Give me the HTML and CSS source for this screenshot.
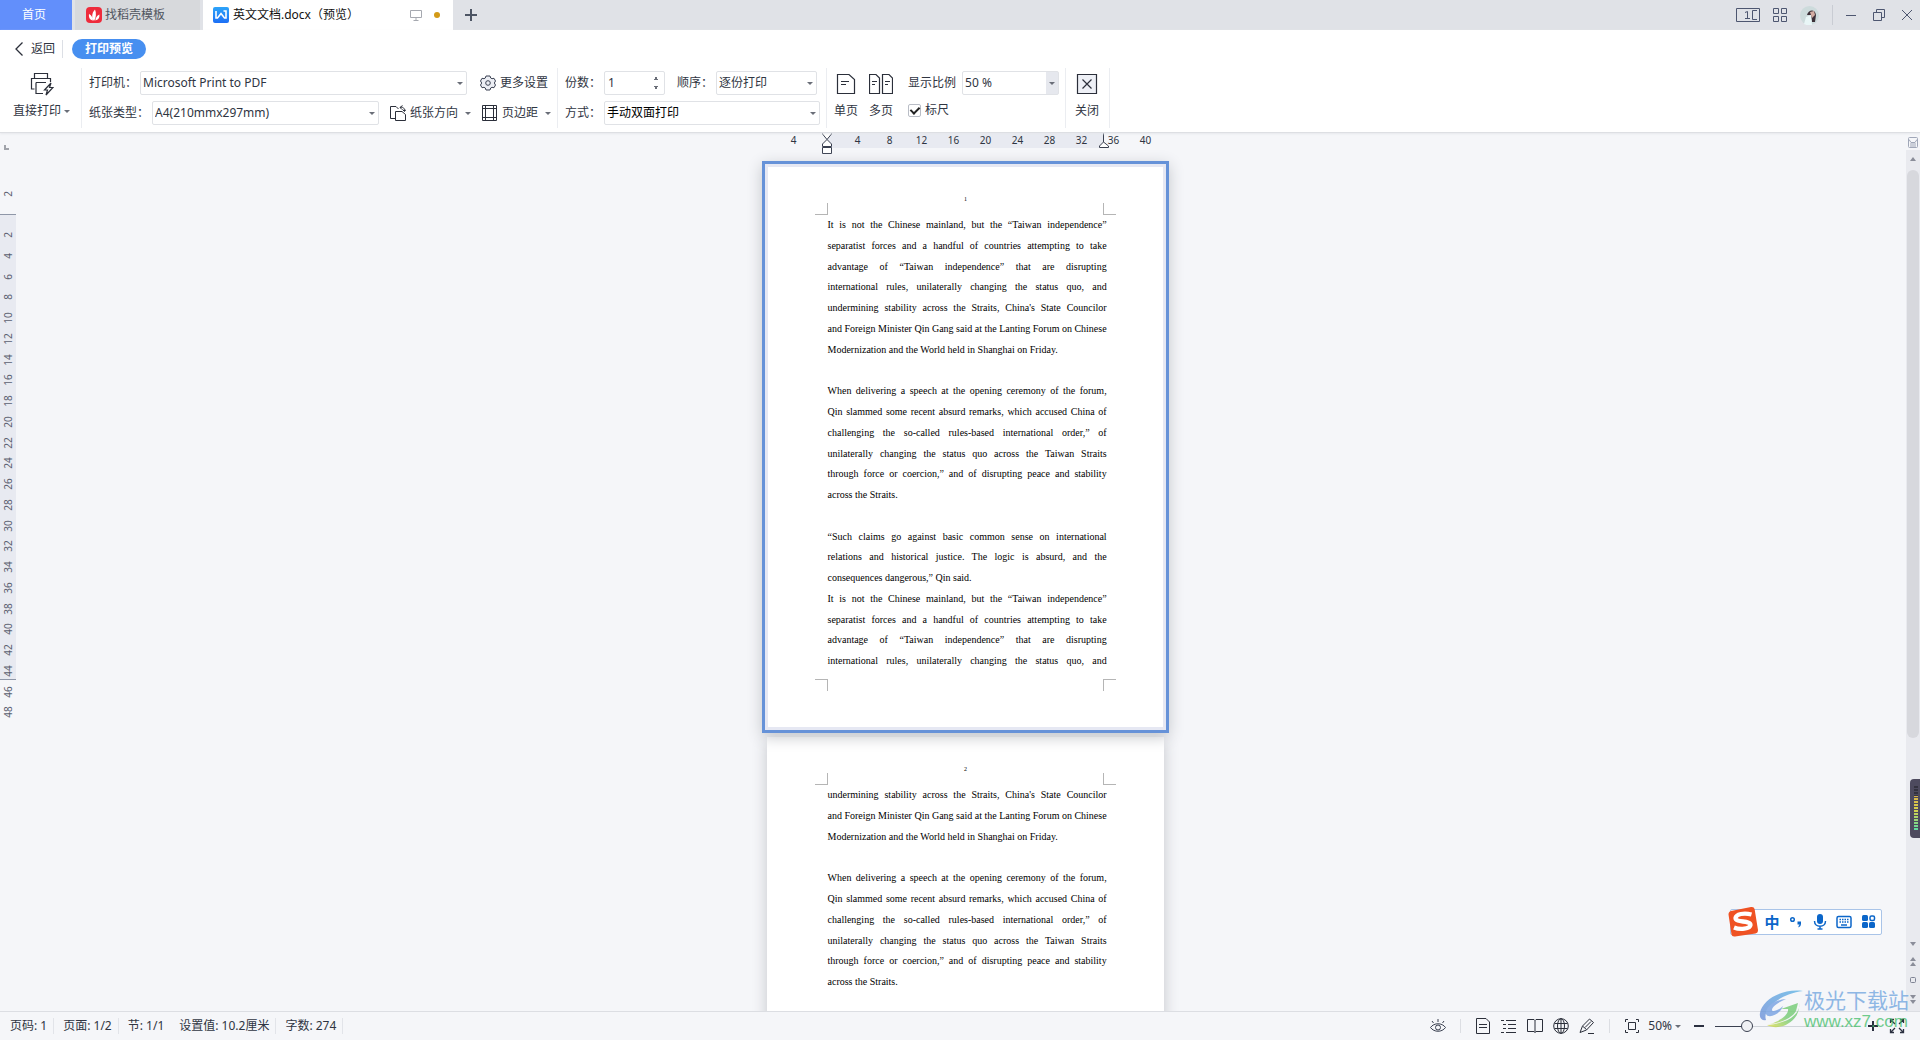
FILE: index.html
```html
<!DOCTYPE html>
<html lang="zh-CN">
<head>
<meta charset="utf-8">
<title>英文文档.docx（预览）</title>
<link rel="stylesheet" href="styles.css">
</head>
<body>
<header class="tabs">
  <button class="tab tab-home">首页</button>
  <button class="tab tab-idle">
    <svg width="16" height="16" viewBox="0 0 16 16"><rect width="16" height="16" rx="4" fill="#ee2b3b"/><path d="M8 14C5.500 11 5.500 6 9 2.500C10.500 6 10.200 11 8 14ZM7 13.500C4 13 2.500 10.500 3 7C5.500 8 6.500 10.500 7 13.500ZM9.300 13.500C9.600 11 10.800 8.500 13.400 7.500C13.800 10.500 12.400 13 9.300 13.500Z" fill="#fff"/></svg>
    <span>找稻壳模板</span>
  </button>
  <button class="tab tab-active">
    <svg width="16" height="16" viewBox="0 0 16 16"><defs><linearGradient id="w" x1="0" y1="0" x2="0" y2="1"><stop offset="0" stop-color="#2da4f9"/><stop offset="1" stop-color="#1d6ff5"/></linearGradient></defs><rect width="16" height="16" rx="2" fill="url(#w)"/><path d="M3 4V11H4.500L8 6.500L11.500 11H13V4H10.500" fill="none" stroke="#fff" stroke-width="1.600"/></svg>
    <span class="tab-name">英文文档.docx（预览）</span>
    <svg width="12" height="12" viewBox="0 0 12 12" fill="none" stroke="#a6a9b0"><path d="M.5 1.500H11.500V8.500H.5ZM6 8.500V11M3.500 11.500H8.500"/></svg>
    <span class="dot"></span>
  </button>
  <button class="tab-add" aria-label="新建"><svg width="12" height="12" viewBox="0 0 12 12" stroke="#4d5564" stroke-width="2"><path d="M6 0V12M0 6H12"/></svg></button>
  <div class="win">
    <svg width="24" height="14" viewBox="0 0 24 14" fill="none" stroke="#4d5670"><path d="M.5.5H23.500V13.500H.5ZM9 4.500L11.500 3.500V11M9 10.500H14M21 2.500H16.500V11.500H21M19 11.500H21"/></svg>
    <svg width="14" height="14" viewBox="0 0 14 14" fill="none" stroke="#4d5670"><path d="M.5.5H5.500V5.500H.5ZM8.500.5H13.500V5.500H8.500ZM.5 8.500H5.500V13.500H.5ZM8.500 8.500H13.500V13.500H8.500Z"/></svg>
    <svg width="19" height="19" viewBox="0 0 19 19"><circle cx="9.500" cy="9.500" r="9.500" fill="#cddbdc"/><path d="M7 9C8 4 15 2 16 9L15 16H12L11 9Z" fill="#3d3038"/><path d="M10 6L14 5L15 9L12 12Z" fill="#d3aca2"/><path d="M4 18L6 11L11 9L12 19C9 20 6 19 4 18Z" fill="#e9f6f7"/></svg>
    <span class="win-rule"></span>
    <button aria-label="最小化"><svg width="10" height="12" viewBox="0 0 10 12" stroke="#4d5670"><path d="M0 6.500H10"/></svg></button>
    <button aria-label="还原"><svg width="12" height="12" viewBox="0 0 12 12" fill="none" stroke="#4d5670"><path d="M.5 3.500H8.500V11.500H.5ZM3.500 3.500V.5H11.500V8.500H8.500"/></svg></button>
    <button aria-label="关闭窗口"><svg width="10" height="10" viewBox="0 0 10 10" stroke="#4d5670"><path d="M0 0L10 10M10 0L0 10"/></svg></button>
  </div>
</header>

<section class="ribbon">
  <div class="ribbon-head">
    <button class="back"><svg width="8" height="14" viewBox="0 0 8 14" fill="none" stroke="#2b2f3a" stroke-width="1.300"><path d="M7.500.5L1 7L7.500 13.500"/></svg>返回</button>
    <span class="pill">打印预览</span>
  </div>
  <div class="ribbon-body">
    <div class="group group-print">
      <button class="big">
        <svg width="24" height="24" viewBox="0 0 24 24" fill="none" stroke="#2b2f3a" stroke-width="1.200"><path d="M4.500 6V1.500H17.500V6M4.500 17H1.500V6.500H20.500V10M6 10.500H16M6 10.500V21.500H13M21 11L14.500 18H17.500L16 23L23 15.500H19.500Z"/></svg>
        <span>直接打印<i class="caret"></i></span>
      </button>
    </div>
    <div class="group group-rows">
      <div class="row">
        <label for="printer">打印机：</label>
        <span class="pick pick-printer"><select id="printer"><option>Microsoft Print to PDF</option></select></span>
        <button class="tool tool-more"><svg width="16" height="16" viewBox="0 0 16 16" fill="#eceef4" stroke="#3a4152"><path d="M6 1H10L10.700 3L12 3.700L14 3.300L15.500 6L14.300 8L15.500 10L14 12.700L12 12.300L10.700 13L10 15H6L5.300 13L4 12.300L2 12.700L.5 10L1.700 8L.5 6L2 3.300L4 3.700L5.300 3Z"/><circle cx="8" cy="8" r="2.300"/></svg>更多设置</button>
      </div>
      <div class="row">
        <label for="paper">纸张类型：</label>
        <span class="pick pick-paper"><select id="paper"><option>A4(210mmx297mm)</option></select></span>
        <button class="tool"><svg width="16" height="16" viewBox="0 0 16 16" fill="none" stroke="#2b2f3a"><path d="M5 13.500H.5V1.500H6L8.500 4M5.500 6.500H12L15.500 9.500V15.500H5.500ZM10 2.500C13 1.500 14.500 3 14.500 6M12.500 .5L10 2.500L12 4.500M12.500 4.500L14.500 6.500L16 4.500"/></svg>纸张方向<i class="caret"></i></button>
        <button class="tool"><svg width="16" height="16" viewBox="0 0 16 16" fill="none" stroke="#2b2f3a"><path d="M.5.5H14.500V15.500H.5ZM3.500.5V15.500M11.500.5V15.500M.5 3.500H14.500M.5 12.500H14.500"/></svg>页边距<i class="caret"></i></button>
      </div>
    </div>
    <div class="group group-rows">
      <div class="row">
        <label for="copies">份数：</label>
        <span class="spin"><input id="copies" type="text" value="1"><i></i></span>
        <label class="gap-label" for="order">顺序：</label>
        <span class="pick pick-order"><select id="order"><option>逐份打印</option></select></span>
      </div>
      <div class="row">
        <label for="mode">方式：</label>
        <span class="pick pick-mode"><select id="mode"><option>手动双面打印</option></select></span>
      </div>
    </div>
    <div class="group group-view">
      <button class="big"><svg width="24" height="24" viewBox="0 0 24 24" fill="none" stroke="#2b2f3a" stroke-width="1.200"><path d="M3.500 2.500H15L20.500 7.500V21.500H3.500ZM7 9.500H15M7 12.500H12"/></svg><span>单页</span></button>
      <button class="big"><svg width="24" height="24" viewBox="0 0 24 24" fill="none" stroke="#2b2f3a" stroke-width="1.200"><path d="M.5 2.500H7L10.500 6V21.500H.5ZM13.500 2.500H20L23.500 6V21.500H13.500ZM3 9.500H8M3 12.500H6M16 9.500H21M16 12.500H19"/></svg><span>多页</span></button>
      <div class="stack">
        <div class="row">
          <label for="zoom">显示比例</label>
          <span class="pick pick-zoom"><select id="zoom"><option>50 %</option></select></span>
        </div>
        <label class="check"><input type="checkbox" checked>标尺</label>
      </div>
    </div>
    <div class="group group-close">
      <button class="big"><svg width="24" height="24" viewBox="0 0 24 24" fill="#eef0f6" stroke="#2b2f3a" stroke-width="1.200"><path d="M2.500 2.500H21.500V21.500H2.500ZM7.500 7.500L16.500 16.500M16.500 7.500L7.500 16.500"/></svg><span>关闭</span></button>
    </div>
  </div>
</section>

<main class="work">
  <aside class="vruler">
    <span class="tabstop"></span>
    <div class="vtop"><b>2</b></div>
    <div class="vnums"><b>2</b><b>4</b><b>6</b><b>8</b><b>10</b><b>12</b><b>14</b><b>16</b><b>18</b><b>20</b><b>22</b><b>24</b><b>26</b><b>28</b><b>30</b><b>32</b><b>34</b><b>36</b><b>38</b><b>40</b><b>42</b><b>44</b><b>46</b><b>48</b></div>
  </aside>
  <div class="canvas">
    <div class="hruler">
      <b>4</b><b></b><b>4</b><b>8</b><b>12</b><b>16</b><b>20</b><b>24</b><b>28</b><b>32</b><b>36</b><b>40</b>
      <svg class="indent-left" width="10" height="22" viewBox="0 0 10 22" fill="#fff" stroke="#3a4050"><path d="M.5.5H9.500V2L5 7.500L.5 2ZM5 7.500L9.500 12V14.500H.5V12ZM.5 15.500H9.500V21.500H.5Z"/></svg>
      <svg class="indent-right" width="10" height="16" viewBox="0 0 10 16" fill="#fff" stroke="#3a4050"><path d="M4.500 0V10M4.500 10L9.500 14V15.500H.5V14Z"/></svg>
    </div>
    <article class="sheet sheet-current">
      <div class="folio">1</div>
      <div class="marks marks-top"><i></i><i></i></div>
      <div class="lines lines-full">
        <p>It is not the Chinese mainland, but the “Taiwan independence”</p>
        <p>separatist forces and a handful of countries attempting to take</p>
        <p>advantage of “Taiwan independence” that are disrupting</p>
        <p>international rules, unilaterally changing the status quo, and</p>
        <p>undermining stability across the Straits, China's State Councilor</p>
        <p>and Foreign Minister Qin Gang said at the Lanting Forum on Chinese</p>
        <p class="end">Modernization and the World held in Shanghai on Friday.</p>
        <p></p>
        <p>When delivering a speech at the opening ceremony of the forum,</p>
        <p>Qin slammed some recent absurd remarks, which accused China of</p>
        <p>challenging the so-called rules-based international order,” of</p>
        <p>unilaterally changing the status quo across the Taiwan Straits</p>
        <p>through force or coercion,” and of disrupting peace and stability</p>
        <p class="end">across the Straits.</p>
        <p></p>
        <p>“Such claims go against basic common sense on international</p>
        <p>relations and historical justice. The logic is absurd, and the</p>
        <p class="end">consequences dangerous,” Qin said.</p>
        <p>It is not the Chinese mainland, but the “Taiwan independence”</p>
        <p>separatist forces and a handful of countries attempting to take</p>
        <p>advantage of “Taiwan independence” that are disrupting</p>
        <p>international rules, unilaterally changing the status quo, and</p>
      </div>
      <div class="marks marks-bottom"><i></i><i></i></div>
    </article>
    <article class="sheet sheet-next">
      <div class="folio">2</div>
      <div class="marks marks-top"><i></i><i></i></div>
      <div class="lines">
        <p>undermining stability across the Straits, China's State Councilor</p>
        <p>and Foreign Minister Qin Gang said at the Lanting Forum on Chinese</p>
        <p class="end">Modernization and the World held in Shanghai on Friday.</p>
        <p></p>
        <p>When delivering a speech at the opening ceremony of the forum,</p>
        <p>Qin slammed some recent absurd remarks, which accused China of</p>
        <p>challenging the so-called rules-based international order,” of</p>
        <p>unilaterally changing the status quo across the Taiwan Straits</p>
        <p>through force or coercion,” and of disrupting peace and stability</p>
        <p class="end">across the Straits.</p>
      </div>
    </article>
  </div>
  <aside class="scroll">
    <svg width="14" height="17" viewBox="0 0 14 17" fill="none" stroke="#a0a7b8"><rect x="2.500" y="4.500" width="9" height="10" rx="1"/><path d="M3 6.500L5 9.500H9L11 6.500M5 14V10M9 14V10M7 14V10"/></svg>
    <div class="track">
      <svg width="14" height="20" viewBox="0 0 14 20" fill="#8a8d99"><path d="M4 11L7 7L10 11Z"/></svg>
      <span class="thumb"></span>
      <svg class="jumps" width="14" height="77" viewBox="0 0 14 77" fill="#8a8d99"><path d="M4 8H10L7 12ZM4 27L7 23L10 27ZM4 32L7 28L10 32ZM4 61H10L7 65ZM4 66H10L7 70Z"/><rect x="4.500" y="43.500" width="5" height="5" rx="1" fill="none" stroke="#7f8494"/></svg>
    </div>
  </aside>
</main>

<footer class="status">
  <span class="cell">页码: 1</span><span class="cell">页面: 1/2</span><span class="cell plain">节: 1/1</span><span class="cell wide">设置值: 10.2厘米</span><span class="cell">字数: 274</span>
  <div class="tools">
    <button aria-label="护眼"><svg width="16" height="16" viewBox="0 0 16 16" fill="none" stroke="#3a4050"><path d="M.5 9.500C4 4.500 12 4.500 15.500 9.500C12 14.500 4 14.500 .5 9.500ZM8 4V1M3.500 5L2 3M12.500 5L14 3"/><circle cx="8" cy="9.500" r="2.500"/></svg></button>
    <span class="rule"></span>
    <button aria-label="页面视图"><svg width="16" height="16" viewBox="0 0 16 16" fill="none" stroke="#2b2f3a"><path d="M1.500.5H11L14.500 4V15.500H1.500ZM4 6.500H12M4 9.500H12"/></svg></button>
    <button aria-label="大纲"><svg width="16" height="16" viewBox="0 0 16 16" fill="none" stroke="#2b2f3a"><path d="M0 2.500H3M5 2.500H15M2 6.500H5M7 6.500H15M2 10.500H5M7 10.500H15M0 14.500H3M5 14.500H15"/></svg></button>
    <button aria-label="阅读版式"><svg width="16" height="16" viewBox="0 0 16 16" fill="none" stroke="#2b2f3a"><path d="M8 2.500L7 1.500H.5V13.500H7L8 14.500L9 13.500H15.500V1.500H9L8 2.500V14.500"/></svg></button>
    <button aria-label="Web版式"><svg width="16" height="16" viewBox="0 0 16 16" fill="none" stroke="#2b2f3a"><circle cx="8" cy="8" r="7.300"/><ellipse cx="8" cy="8" rx="3.500" ry="7.300"/><path d="M8 .5V15.500M1.500 5.500H14.500M1.500 10.500H14.500"/></svg></button>
    <button aria-label="写作模式"><svg width="16" height="16" viewBox="0 0 16 16" fill="none" stroke="#2b2f3a"><path d="M1 14.500L3.500 8L10.500 1L14.500 4.500L7.500 12L1 14.500ZM4 8.500L7.500 11.500M6 9.500L12 3.500M9 15.500H15"/></svg></button>
    <span class="rule"></span>
    <button aria-label="适应页面"><svg width="16" height="16" viewBox="0 0 16 16" fill="none" stroke="#2b2f3a"><path d="M1.500 4V1.500H4M12 1.500H14.500V4M14.500 12V14.500H12M4 14.500H1.500V12M4.500 4.500H11.500V11.500H4.500Z"/></svg></button>
    <button class="pct">50%<i class="caret"></i></button>
    <button aria-label="缩小"><svg width="12" height="16" viewBox="0 0 12 16" stroke="#2b3040" stroke-width="2"><path d="M1 8H11"/></svg></button>
    <input class="slide" type="range" min="0" max="100" value="20" aria-label="缩放">
    <button aria-label="放大"><svg width="12" height="16" viewBox="0 0 12 16" stroke="#2b3040" stroke-width="2"><path d="M1 8H11M6 3V13"/></svg></button>
    <button aria-label="全屏"><svg width="16" height="16" viewBox="0 0 16 16" fill="none" stroke="#2b3040" stroke-width="1.300"><path d="M1.500 5V1.500H5M1.500 1.500L6 6M11 1.500H14.500V5M14.500 1.500L10 6M1.500 11V14.500H5M1.500 14.500L6 10M11 14.500H14.500V11M14.500 14.500L10 10"/></svg></button>
  </div>
</footer>

<div class="meter"></div>

<div class="ime">
  <svg class="ime-logo" width="32" height="32" viewBox="0 0 32 32"><path d="M4 5L24 1Q27 .500 27.600 3L31 24Q31 27 28.500 27.500L8 30.500Q5 31 4.500 28.500L1.500 8.500Q1.500 5.500 4 5Z" fill="#ef5223"/><path d="M24.500 8.500C17 6.500 9 8 8.500 12C8.500 17 23.500 14 23.500 19C23 23 13 24 7 21.500" fill="none" stroke="#fff" stroke-width="4.300"/></svg>
  <span class="ime-lang">中</span>
  <svg width="14" height="16" viewBox="0 0 14 16"><circle cx="3.500" cy="5.500" r="1.800" fill="none" stroke="#0b66c9" stroke-width="1.500"/><path d="M8.500 7.500H12V10Q12 12.500 9.500 13.500V12Q10.500 11 10.500 10.500H8.500Z" fill="#0b66c9"/></svg>
  <svg width="14" height="16" viewBox="0 0 14 16"><rect x="4" y="0" width="6" height="10" rx="3" fill="#0b66c9"/><path d="M1.500 7C1.500 14 12.500 14 12.500 7M7 12V15.500M4.500 15H9.500" fill="none" stroke="#0b66c9" stroke-width="1.500"/></svg>
  <svg width="16" height="16" viewBox="0 0 16 16" fill="none" stroke="#0b66c9"><rect x="1" y="2.500" width="14" height="11" rx="1.500" stroke-width="1.500"/><path d="M3.500 5.500H13M3.500 8H13" stroke-width="1.600" stroke-dasharray="1.500 1"/><path d="M5 11H11" stroke-width="1.500"/></svg>
  <svg width="14" height="16" viewBox="0 0 14 16" fill="#0b66c9"><rect x="0" y="1" width="6" height="6" rx="1.500"/><rect x="0" y="8" width="6" height="6" rx="1.500"/><rect x="7" y="8" width="6" height="6" rx="1.500"/><rect x="8" y="2" width="4.500" height="4.500" rx="1.500" fill="none" stroke="#0b66c9" stroke-width="1.500"/></svg>
</div>

<div class="mark">
  <svg width="46" height="42" viewBox="0 0 46 42"><defs><linearGradient id="g1" x1="0" y1="1" x2="1" y2="0"><stop offset="0" stop-color="#6689d6"/><stop offset="1" stop-color="#54b0e4"/></linearGradient><linearGradient id="g2" x1="0" y1="1" x2="1" y2="0"><stop offset="0" stop-color="#e3df3f"/><stop offset=".5" stop-color="#6cc86b"/><stop offset="1" stop-color="#69c96b"/></linearGradient></defs><path d="M45 2C24-1 4 11 2 24C1 29 4 32 8 31C4 20 22 5 45 2Z" fill="url(#g1)"/><path d="M28 10C15 11 7 19 8 25C10 30 22 26 25 17C20 22 14 23 14 21C14 17 21 13 28 10Z" fill="#6d9be0"/><path d="M41 14C43 24 32 34 9 36C22 43 43 32 41 14ZM23 20L40 14L38 22C35 28 24 34 12 35C25 31 31 24 30 20Z" fill="url(#g2)"/></svg>
  <div><span class="mark-name">极光下载站</span><span class="mark-url">www.xz7.com</span></div>
</div>
</body>
</html>
```
FILE: styles.css
```css
* { box-sizing: border-box; }
body {
  margin: 0;
  height: 100vh;
  display: flex;
  flex-direction: column;
  overflow: hidden;
  position: relative;
  background: #f5f6f9;
  color: #2f3542;
  font: 12px/16px "Noto Sans", "Noto Sans CJK SC", sans-serif;
}
button, select, input { font: inherit; color: inherit; }
button { border: 0; padding: 0; background: none; display: flex; align-items: center; white-space: nowrap; }
svg { flex: none; display: block; }
p { margin: 0; }
b, i { font-weight: 400; font-style: normal; }

/* Document tabs */
.tabs { display: flex; height: 30px; flex: none; background: #e0e2e7; }
.tab { height: 30px; }
.tab-home { width: 72px; padding-left: 22px; background: #628ffb; color: #fff; margin-right: 3px; }
.tab-idle { width: 125px; padding-left: 11px; gap: 3px; background: #d7d9dc; color: #50555f; margin-right: 3px; }
.tab-active { width: 250px; padding: 0 13px 0 10px; gap: 4px; background: #fff; color: #111; }
.tab-name { flex: 1; text-align: left; }
.dot { width: 6px; height: 6px; border-radius: 50%; background: #d39a17; margin-left: 8px; }
.tab-add { margin-left: 12px; }
.win { margin-left: auto; display: flex; align-items: center; gap: 13px; padding-right: 8px; }
.win-rule { width: 1px; height: 20px; background: #c9ccd3; }
.win button + button { margin-left: 4px; }

/* Print ribbon */
.ribbon { flex: none; background: #fff; border-bottom: 1px solid #dddfe3; box-shadow: 0 1px 2px #e6e8ec; z-index: 1; }
.ribbon-head { display: flex; align-items: center; height: 38px; padding-left: 15px; }
.back { gap: 8px; height: 18px; padding-right: 7px; border-right: 1px solid #dcdfe5; }
.pill { margin-left: 9px; width: 74px; height: 20px; border-radius: 10px; background: #478ff0; color: #fff; font-weight: 700; line-height: 20px; text-align: center; }
.ribbon-body { display: flex; height: 64px; }
.group { display: flex; height: 60px; padding-top: 3px; border-right: 1px solid #ebedf1; white-space: nowrap; }
.group-print { width: 82px; padding-left: 13px; }
.big { flex-direction: column; height: 52px; gap: 7px; padding-top: 1px; }
.big span { display: flex; align-items: center; }
.group-rows { flex-direction: column; gap: 6px; padding: 3px 6px 0 7px; }
.row { display: flex; align-items: center; height: 24px; }
.row label { margin-right: 3px; }
.caret { width: 0; height: 0; border: 3px solid transparent; border-top-color: #6a6e78; border-bottom: 0; margin-left: 3px; }
.pick { position: relative; display: block; height: 24px; border: 1px solid #e0e2e6; border-radius: 2px; background: #fff; }
.pick::after { content: ""; position: absolute; right: 3px; top: 10px; border: 3px solid transparent; border-top-color: #6a6e78; border-bottom: 0; }
.pick select { appearance: none; border: 0; background: none; width: 100%; height: 22px; padding: 0 2px; }
.pick-printer { width: 327px; }
.pick-paper { width: 227px; }
.pick-order { width: 101px; }
.pick-mode { width: 216px; }
.pick-mode select { color: #000; }
.pick-zoom { width: 97px; margin-left: 3px; background: linear-gradient(to left, #e6e8ee 12px, #fff 12px); }
.tool { margin-left: 11px; gap: 4px; }
.tool-more { margin-left: 13px; }
.spin { display: flex; align-items: center; width: 61px; height: 24px; border: 1px solid #e0e2e6; border-radius: 2px; }
.spin input { width: 48px; border: 0; padding: 0 3px; background: none; }
.spin i { width: 6px; height: 14px; background: conic-gradient(from 153deg at 3px 0, #6a6e78 54deg, transparent 0) 0 0 / 6px 4px no-repeat, conic-gradient(from -27deg at 3px 4px, #6a6e78 54deg, transparent 0) 0 10px / 6px 4px no-repeat; }
.gap-label { margin-left: 12px; }
.group-view { padding: 3px 6px 0 7px; gap: 11px; }
.group-close { padding: 3px 10px 0 9px; }
.stack { display: flex; flex-direction: column; gap: 4px; margin-left: 4px; }
.check { display: flex; align-items: center; gap: 4px; height: 22px; }
.check input { appearance: none; width: 13px; height: 13px; margin: 0; border: 1px solid #b9bdc6; border-radius: 2px; display: grid; place-items: center; }
.check input:checked::after { content: ""; width: 4px; height: 7px; border: solid #222; border-width: 0 2px 2px 0; transform: rotate(45deg); margin-top: -2px; }

/* Preview area */
.work { flex: 1; min-height: 0; display: flex; }
.vruler { width: 16px; flex: none; font-size: 10px; line-height: 16px; color: #5b6070; }
.vruler b { writing-mode: vertical-rl; transform: rotate(180deg); text-align: center; line-height: 16px; width: 16px; }
.tabstop { display: block; width: 5px; height: 5px; margin: 12px 0 0 4px; border: solid #a0a3aa; border-width: 0 0 2px 2px; }
.vtop { display: flex; align-items: center; height: 65px; padding-top: 24px; border-bottom: 1px solid #8f97a8; }
.vnums { display: grid; grid-auto-rows: 1fr; height: 508px; padding-top: 10px; background: linear-gradient(#e8eaf1 464px, #8f97a8 464px 465px, transparent 465px); }
.canvas { flex: 1; min-width: 0; overflow: hidden; padding-left: 9px; display: flex; flex-direction: column; align-items: center; }
.hruler { position: relative; flex: none; display: grid; grid-template-columns: repeat(12, 32px); height: 15px; margin-bottom: 13px; margin-left: 8px; font-size: 10px; line-height: 14px; text-align: center; background: linear-gradient(to right, transparent 50px, #e8eaf1 50px 326px, transparent 326px); }
.indent-left { position: absolute; left: 44px; top: -1px; }
.indent-right { position: absolute; left: 321px; top: -1px; }
.sheet { flex: none; display: flex; flex-direction: column; align-items: center; background: #fff; color: #000; box-shadow: 0 4px 14px #c4c6cb; }
.sheet-current { width: 407px; height: 572px; border: 3px solid #6692d8; box-shadow: inset 0 0 0 3px #e6e8f3, 0 4px 14px #c4c6cb; position: relative; z-index: 1; padding-top: 31px; }
.sheet-next { width: 397px; height: 561px; margin-top: 4px; padding-top: 28px; }
.folio { height: 8px; font: 6px/8px "Liberation Serif", serif; }
.marks { display: flex; justify-content: space-between; width: 301px; }
.marks i { width: 13px; height: 12px; border: 0 solid #b5b5b5; }
.marks-top i { border-bottom-width: 1px; }
.marks-bottom i { border-top-width: 1px; }
.marks i:first-child { border-right-width: 1px; }
.marks i:last-child { border-left-width: 1px; }
.marks-bottom { margin-top: 7px; }
.lines { display: grid; grid-auto-rows: 1fr; width: 276px; height: 208px; font: 10px/20px "Liberation Serif", serif; }
.lines-full { height: 457px; }
.lines p { text-align: justify; text-align-last: justify; white-space: nowrap; height: 20px; }
.lines .end { text-align-last: left; }

.scroll { width: 14px; flex: none; display: flex; flex-direction: column; }
.track { flex: 1; display: flex; flex-direction: column; align-items: center; background: #e9eaef; }
.thumb { width: 12px; height: 66%; border-radius: 6px; background: #d7d8dd; }
.jumps { margin-top: auto; }

/* Status bar */
.status { flex: none; display: flex; align-items: center; height: 29px; border-top: 1px solid #dcdee3; padding-right: 15px; white-space: nowrap; }
.cell { padding: 0 6px 0 9px; border-right: 1px solid #e2e4e9; }
.cell:first-child { padding-left: 10px; }
.plain { border-right: 0; }
.tools { margin-left: auto; display: flex; align-items: center; gap: 10px; }
.rule { width: 1px; height: 14px; background: #dcdee3; margin: 0 4px; }
.pct { margin-right: 2px; margin-left: -2px; }
.slide { appearance: none; width: 142px; height: 16px; margin: 0; background: linear-gradient(#3a4050, #3a4050) 0 8px / 30px 1px no-repeat, linear-gradient(#cfd3d9, #cfd3d9) 0 8px / 100% 1px no-repeat; }
.slide::-webkit-slider-thumb { appearance: none; width: 12px; height: 12px; border: 1px solid #3a4050; border-radius: 50%; background: #f0f1f4; }

/* Floating widgets above the window */
.meter { position: absolute; right: 0; bottom: 202px; width: 10px; height: 59px; z-index: 3; border-radius: 4px 0 0 4px; border: solid #4d4a5e; border-width: 7px 2px 7px 4px; background: repeating-linear-gradient(transparent 0 2px, #4d4a5e 2px 3px), linear-gradient(#33323f 10px, #d9b24a 10px, #d5d24c 24px, #58dca6); }
.ime { position: absolute; right: 38px; bottom: 105px; z-index: 3; display: flex; align-items: center; justify-content: space-between; width: 152px; height: 26px; padding: 0 5px 0 0; border: 1px solid #a9c4e8; border-radius: 2px; background: #fff; }
.ime-logo { margin-left: -4px; margin-right: -4px; }
.ime-lang { color: #0b66c9; font-size: 15px; font-weight: 700; }
.mark { position: absolute; right: 11px; bottom: 8px; z-index: 4; display: flex; align-items: center; opacity: .75; pointer-events: none; }
.mark div { display: flex; flex-direction: column; }
.mark-name { color: #6ca2de; font-size: 21px; line-height: 24px; }
.mark-url { color: #42bd68; font: 17px/20px "Liberation Sans", sans-serif; }
```
